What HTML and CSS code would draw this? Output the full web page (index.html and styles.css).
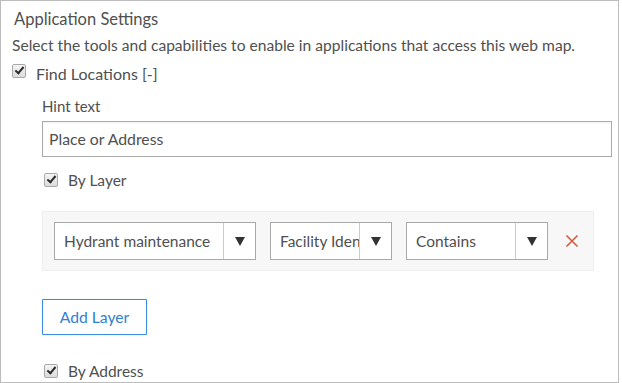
FILE: index.html
```html
<!DOCTYPE html>
<html lang="en">
  <head>
    <meta charset="UTF-8" />
    <title>Application Settings</title>
    <link rel="stylesheet" href="styles.css">
  </head>
  <body>
    <div class="panel">
      <div class="title">Application Settings</div>
      <div class="desc">Select the tools and capabilities to enable in applications that access this web map.</div>

      <label class="check top">
        <span class="box"></span>
        <span>Find Locations [-]</span>
      </label>

      <div class="section">
        <div class="hint-label">Hint text</div>
        <div class="text-input">Place or Address</div>

        <label class="check">
          <span class="box"></span>
          <span>By Layer</span>
        </label>

        <div class="layer-row">
          <div class="select sel-layer">
            <span class="value">Hydrant maintenance</span>
            <span class="arrow"></span>
          </div>
          <div class="select sel-field">
            <span class="value">Facility Identifier</span>
            <span class="arrow"></span>
          </div>
          <div class="select sel-op">
            <span class="value">Contains</span>
            <span class="arrow"></span>
          </div>
          <svg class="remove" width="14" height="14" viewBox="0 0 14 14">
            <path d="M1.5 1.5 L12.5 12.5 M12.5 1.5 L1.5 12.5" stroke="#d65a3e" stroke-width="1.6" fill="none" />
          </svg>
        </div>

        <button type="button" class="add-btn">Add Layer</button>

        <label class="check">
          <span class="box"></span>
          <span>By Address</span>
        </label>
      </div>
    </div>
  </body>
</html>
```

FILE: styles.css
```css
body {
  margin: 0;
  padding: 0;
  background: white;
  font-family: Lato, "Open Sans", sans-serif;
  color: #505050;
}
.panel {
  width: 606px;
  height: 381px;
  border: 1px solid #bcbcbc;
  padding: 0 0 0 11px;
  overflow: hidden;
}
.title {
  font-size: 16.5px;
  margin: 8px 0 0 2px;
  line-height: 20px;
}
.desc {
  font-size: 15.6px;
  line-height: 18px;
  margin-top: 7px;
}
.check {
  display: flex;
  align-items: center;
  font-size: 15.5px;
  line-height: 18px;
}
.check .box {
  width: 12px;
  height: 12px;
  border: 1px solid #a9a9a9;
  border-radius: 2px;
  background: linear-gradient(#f4f4f4, #dcdcdc);
  margin-right: 10px;
  position: relative;
}
.check .box::after {
  content: "";
  position: absolute;
  left: 4px;
  top: 0px;
  width: 3px;
  height: 7px;
  border: solid #2b2b2b;
  border-width: 0 2.5px 2.5px 0;
  transform: rotate(40deg);
}
.check.top {
  margin-top: 10px;
  align-items: flex-start;
}
.check.top span:last-child {
  font-size: 16px;
  margin-top: 1px;
}
.section {
  padding-left: 30px;
}
.hint-label {
  font-size: 15px;
  line-height: 18px;
  margin-top: 14px;
}
.text-input {
  width: 562px;
  height: 34px;
  border: 1px solid #aaa;
  padding-left: 6px;
  margin-top: 6px;
  font-size: 15.8px;
  line-height: 34px;
  box-shadow: inset 0 1px 2px rgba(0, 0, 0, 0.06);
}
.section .check {
  margin-top: 14px;
  margin-left: 2px;
}
.layer-row {
  display: flex;
  align-items: center;
  width: 539px;
  height: 58px;
  margin-top: 22px;
  padding-left: 11px;
  background: #f7f7f7;
  border: 1px solid #eee;
}
.select {
  display: flex;
  height: 36px;
  border: 1px solid #a9a9a9;
  background: white;
  font-size: 15.5px;
  margin-right: 14px;
}
.select .value {
  flex: 1;
  padding-left: 9px;
  line-height: 36px;
  white-space: nowrap;
  overflow: hidden;
}
.select .arrow {
  width: 31px;
  border-left: 1px solid #ccc;
  display: flex;
  align-items: center;
  justify-content: center;
}
.select .arrow::after {
  content: "";
  border-left: 5px solid transparent;
  border-right: 5px solid transparent;
  border-top: 9px solid #333;
}
.sel-layer {
  width: 200px;
}
.sel-field {
  width: 120px;
}
.sel-op {
  width: 140px;
}
.remove {
  margin-left: 3px;
}
.add-btn {
  display: block;
  margin-top: 28px;
  width: 105px;
  height: 36px;
  border: 1px solid #3a8de3;
  border-radius: 1px;
  background: white;
  color: #2f7fd1;
  font-family: Lato, "Open Sans", sans-serif;
  font-size: 15.7px;
  padding: 0;
  box-shadow: 0 0 1px rgba(58, 141, 227, 0.5);
}
.section .add-btn + .check {
  margin-top: 27px;
}
```
